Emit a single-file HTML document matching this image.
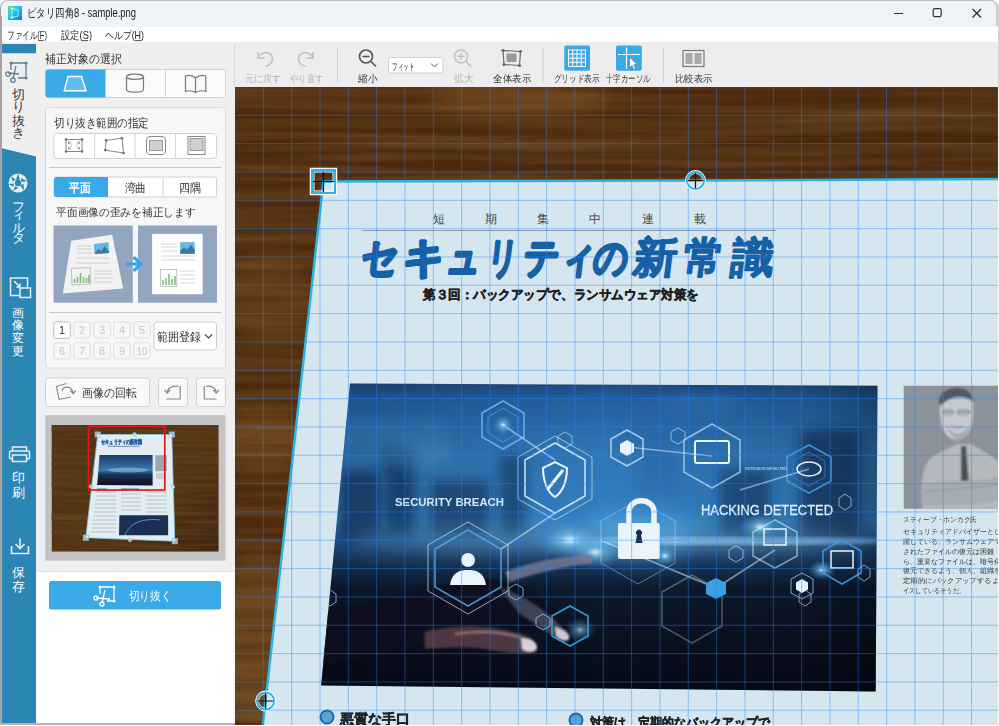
<!DOCTYPE html>
<html><head><meta charset="utf-8">
<style>
html,body{margin:0;padding:0;width:999px;height:726px;overflow:hidden;background:#fff;font-family:"Liberation Sans",sans-serif;}
.a{position:absolute;}
#win{position:absolute;left:0;top:0;width:999px;height:726px;background:#fff;overflow:hidden;}
</style></head><body>
<div id="win">
<div class="a" style="left:0;top:0;width:999px;height:26.5px;background:#eef2f9;border-top:1px solid #b9bcc0;box-sizing:border-box;"></div>
<div class="a" style="left:983px;top:0;width:16px;height:16px;background:#fff;"></div><div class="a" style="left:983px;top:0;width:16px;height:26px;border-top-right-radius:8px;border-right:3px solid #d0d0d0;border-top:1px solid #b9bcc0;box-sizing:border-box;background:#eef2f9;"></div>
<div class="a" style="left:0;top:26.5px;width:999px;height:15.75px;background:#fff;"></div>
<div class="a" style="left:0;top:8px;width:1.5px;height:716px;background:#a6a3a1;"></div><div class="a" style="left:0;top:0;width:8px;height:8px;background:#fff;"></div><div class="a" style="left:0;top:0;width:16px;height:16px;border-top-left-radius:8px;border-left:1.5px solid #a6a3a1;border-top:1px solid #b9bcc0;box-sizing:border-box;background:#eef2f9;"></div>
<div class="a" style="left:0;top:723px;width:235px;height:1.5px;background:#b4b4b4;"></div>
<div class="a" style="left:36px;top:42.25px;width:199px;height:529px;background:#efefef;"></div>
<div class="a" style="left:36px;top:571px;width:199px;height:152px;background:#fff;border-top:1px solid #e2e2e2;box-sizing:border-box;"></div>
<div class="a" style="left:235px;top:42.25px;width:763px;height:44.75px;background:#ededed;"></div><div class="a" style="left:998px;top:26px;width:1px;height:61px;background:#d0d0d0;"></div>
<div class="a" style="left:235px;top:87px;width:763px;height:638px;overflow:hidden;"><svg width="764" height="639" viewBox="0 0 764 639" style="position:absolute;left:0;top:0">
<defs>
<filter id="wood" x="235" y="87" width="764" height="639" filterUnits="userSpaceOnUse">
<feTurbulence type="fractalNoise" baseFrequency="0.003 0.09" numOctaves="3" seed="7"/>
<feColorMatrix type="matrix" values="0 0 0 0 0.2  0 0 0 0 0.1  0 0 0 0 0.03  1.1 0 0 0 -0.36"/>
</filter>
<linearGradient id="woodbase" x1="0" y1="0" x2="1" y2="1">
<stop offset="0" stop-color="#4e2a0c"/><stop offset="0.5" stop-color="#4a280c"/><stop offset="1" stop-color="#3e220a"/>
</linearGradient>
<linearGradient id="imgv" x1="0" y1="0" x2="0" y2="1">
<stop offset="0" stop-color="#1c4478"/>
<stop offset="0.06" stop-color="#2460a0"/>
<stop offset="0.22" stop-color="#2f76b6"/>
<stop offset="0.45" stop-color="#3380bf"/>
<stop offset="0.55" stop-color="#1e4470"/>
<stop offset="0.66" stop-color="#0e1a2e"/>
<stop offset="1" stop-color="#070a14"/>
</linearGradient>
<linearGradient id="imgh" x1="0" y1="0" x2="1" y2="0">
<stop offset="0" stop-color="#000" stop-opacity="0.15"/>
<stop offset="0.5" stop-color="#000" stop-opacity="0"/>
<stop offset="0.85" stop-color="#000" stop-opacity="0.1"/>
<stop offset="1" stop-color="#000" stop-opacity="0.35"/>
</linearGradient>
<radialGradient id="glow" cx="0.5" cy="0.5" r="0.5">
<stop offset="0" stop-color="#e8f8ff" stop-opacity="0.95"/>
<stop offset="0.3" stop-color="#7cc8f0" stop-opacity="0.6"/>
<stop offset="1" stop-color="#3a90d0" stop-opacity="0"/>
</radialGradient>
<radialGradient id="blob" cx="0.5" cy="0.5" r="0.5">
<stop offset="0" stop-color="#0c2040" stop-opacity="0.7"/>
<stop offset="1" stop-color="#0c2040" stop-opacity="0"/>
</radialGradient>
<filter id="blur6" x="-20%" y="-20%" width="140%" height="140%"><feGaussianBlur stdDeviation="6"/></filter><filter id="blur10" x="-50%" y="-200%" width="200%" height="500%"><feGaussianBlur stdDeviation="10"/></filter><filter id="blur1"><feGaussianBlur stdDeviation="0.8"/></filter><filter id="blur2"><feGaussianBlur stdDeviation="2"/></filter>
<clipPath id="imgclip"><polygon points="350,383.5 877.5,385.8 875.7,691.5 321.1,685.4"/></clipPath>
<clipPath id="portclip"><rect x="903.5" y="385.5" width="100" height="123.3"/></clipPath>
</defs>
<g transform="translate(-235,-87)">
<!-- wood -->
<rect x="235" y="87" width="764" height="639" fill="url(#woodbase)"/>
<rect x="235" y="87" width="764" height="639" filter="url(#wood)"/>
<ellipse cx="520" cy="100" rx="90" ry="18" fill="#9a6a30" opacity="0.35" filter="url(#blur10)"/>
<ellipse cx="260" cy="640" rx="45" ry="90" fill="#9a6a30" opacity="0.3" filter="url(#blur10)"/>
<ellipse cx="270" cy="300" rx="40" ry="50" fill="#8a5a28" opacity="0.25" filter="url(#blur10)"/>
<ellipse cx="265" cy="440" rx="40" ry="35" fill="#9a6a30" opacity="0.3" filter="url(#blur10)"/>
<!-- document -->
<polygon points="323.4,181.6 695.5,180.6 1005,179 1005,760 259,760" fill="#d5e6ef"/>
<!-- doc header -->
<g font-family="Liberation Serif, serif" font-size="12" fill="#444">
<text x="433" y="223">短</text><text x="485" y="223">期</text><text x="537" y="223">集</text><text x="589" y="223">中</text><text x="642" y="223">連</text><text x="694" y="223">載</text>
</g>
<rect x="362" y="230" width="414" height="1" fill="#8c9aa2"/>
<g font-size="42" font-weight="bold" fill="#1660a6" stroke="#1660a6" stroke-linejoin="round" transform="translate(0,272) skewX(-7) translate(0,-272)">
<text x="360" y="272" stroke-width="3.0" textLength="37.5" lengthAdjust="spacingAndGlyphs">セ</text>
<text x="402.5" y="272" stroke-width="3.0" textLength="41.2" lengthAdjust="spacingAndGlyphs">キ</text>
<text x="445" y="272" stroke-width="3.0" textLength="35.0" lengthAdjust="spacingAndGlyphs">ュ</text>
<text x="486" y="272" stroke-width="3.0" textLength="30.0" lengthAdjust="spacingAndGlyphs">リ</text>
<text x="522.5" y="272" stroke-width="3.0" textLength="36.2" lengthAdjust="spacingAndGlyphs">テ</text>
<text x="560" y="272" stroke-width="3.0" textLength="33.8" lengthAdjust="spacingAndGlyphs">ィ</text>
<text x="592.5" y="272" stroke-width="2.6" textLength="35.0" lengthAdjust="spacingAndGlyphs">の</text>
<text x="632.5" y="272" stroke-width="1.5" textLength="43.5" lengthAdjust="spacingAndGlyphs">新</text>
<text x="682.5" y="272" stroke-width="1.5" textLength="40.0" lengthAdjust="spacingAndGlyphs">常</text>
<text x="730" y="272" stroke-width="1.4" textLength="42.5" lengthAdjust="spacingAndGlyphs">識</text>
</g>
<text x="423" y="299" font-size="12.5" font-weight="bold" fill="#1e1e1e" stroke="#1e1e1e" stroke-width="0.5" textLength="276" lengthAdjust="spacingAndGlyphs">第３回：バックアップで、ランサムウェア対策を</text>
<!-- image -->
<g clip-path="url(#imgclip)">
<rect x="315" y="380" width="570" height="315" fill="url(#imgv)"/>
<g filter="url(#blur6)">
<rect x="340" y="470" width="40" height="70" fill="#163a66" opacity="0.8"/>
<rect x="385" y="445" width="30" height="95" fill="#143460" opacity="0.7"/>
<rect x="430" y="480" width="60" height="60" fill="#183c6a" opacity="0.7"/>
<rect x="500" y="455" width="25" height="85" fill="#123058" opacity="0.6"/>
<rect x="720" y="470" width="50" height="70" fill="#15345e" opacity="0.6"/>
<rect x="800" y="430" width="60" height="110" fill="#10284e" opacity="0.6"/>
<rect x="640" y="430" width="35" height="60" fill="#2a6aa8" opacity="0.5"/>
<rect x="330" y="420" width="120" height="25" fill="#3f86c2" opacity="0.35"/>
<ellipse cx="420" cy="455" rx="35" ry="12" fill="#4a92cc" opacity="0.5"/>
<ellipse cx="700" cy="405" rx="40" ry="10" fill="#3a7ab8" opacity="0.4"/>
</g>
<rect x="315" y="380" width="570" height="315" fill="url(#imgh)"/>
<g filter="url(#blur10)">
<ellipse cx="610" cy="540" rx="260" ry="9" fill="#8fd0f5" opacity="0.45"/>

<ellipse cx="640" cy="535" rx="55" ry="25" fill="#5ab0e8" opacity="0.5"/>
</g>
<ellipse cx="720" cy="541" rx="170" ry="3.5" fill="#bfe6fb" opacity="0.55" filter="url(#blur2)"/>
<ellipse cx="595" cy="552" rx="30" ry="18" fill="url(#glow)"/>
<ellipse cx="570" cy="540" rx="34" ry="20" fill="url(#glow)"/>
<ellipse cx="760" cy="527" rx="22" ry="14" fill="url(#glow)"/>
<ellipse cx="822" cy="570" rx="14" ry="10" fill="url(#glow)"/>
<ellipse cx="665" cy="556" rx="12" ry="10" fill="url(#glow)"/>
<ellipse cx="503" cy="425" rx="10" ry="10" fill="url(#glow)"/>
<ellipse cx="580" cy="630" rx="16" ry="12" fill="url(#glow)" opacity="0.7"/>
<!-- hand -->
<g filter="url(#blur1)">
<path d="M315 615 C360 605 420 590 470 580 C500 575 525 585 545 603 C558 614 570 628 570 637 C566 643 556 640 548 632 C538 630 525 628 512 624 C480 628 440 640 400 650 C370 656 340 662 315 665 Z" fill="#0e121c" opacity="0.9"/>
<path d="M500 588 C525 596 548 612 562 628 C568 634 566 640 560 640 C552 636 540 626 520 614 Z" fill="#4a4e62" opacity="0.8"/>
<path d="M425 632 C455 624 495 626 522 634 C536 639 541 647 535 652 C522 655 500 652 478 648 C458 646 440 648 425 649 Z" fill="#5a4048" opacity="0.85"/>
<path d="M455 634 C480 630 505 632 522 638" stroke="#c89c9c" stroke-width="2" fill="none" opacity="0.6"/>
<path d="M521 638 C530 638 537 642 537 648 C535 653 527 653 522 649 Z" fill="#d8d0d4"/>
<path d="M555 627 C562 629 570 633 569 639 C566 643 559 640 556 635 Z" fill="#cfc8d0"/>
<path d="M505 572 C530 562 560 556 592 555 L592 563 C562 567 532 574 510 582 Z" fill="#7a7a92" opacity="0.8"/>

</g>
<g fill="none" stroke="#d8eefa" stroke-width="1.6" opacity="0.9">
<polygon points="555,443 585,460 585,496 555,513 525,496 525,460"/>
<polygon points="468,530 501,549 501,587 468,606 435,587 435,549" stroke="#5ab0ea" opacity="0.9"/>
<polygon points="503,401 524,413 524,437 503,449 482,437 482,413" stroke="#6cb8e8"/>
<polygon points="712,424 740,440 740,472 712,488 684,472 684,440" opacity="0.7"/>
<polygon points="627,430 643,439 643,457 627,466 611,457 611,439" opacity="0.8"/>
<polygon points="809,445 831,457 831,481 809,493 787,481 787,457" stroke="#3f9de0"/>
<polygon points="775,520 797,532 797,556 775,568 753,556 753,532" opacity="0.6"/>
<polygon points="842,540 861,551 861,573 842,584 823,573 823,551" stroke="#3f9de0"/>
<polygon points="570,606 588,616 588,636 570,646 552,636 552,616" stroke="#3fa8e8"/>
<polygon points="692,575 722,592 722,626 692,643 662,626 662,592" opacity="0.35"/>
<path d="M503 425 L555 460 M555 513 L501 549 M627 447 L712 456 M809 469 L740 490 M600 540 L716 588 L775 550" opacity="0.6"/>
</g>
<g fill="none" stroke="#cfe8f8" stroke-width="1" opacity="0.7">
<polygon points="555,436 592,457 592,499 555,520 518,499 518,457"/>
<polygon points="468,522 508,545 508,591 468,614 428,591 428,545"/>
<polygon points="503,408 518,417 518,433 503,442 488,433 488,417" stroke="#4aa6e8"/>
<polygon points="809,452 825,461 825,477 809,486 793,477 793,461" stroke="#2f8ad8"/>
<polygon points="638,500 675,521 675,563 638,584 601,563 601,521" opacity="0.6"/>
</g>
<path d="M547 490 L563 470" stroke="#eaf4fb" stroke-width="3"/>
<text x="745" y="470" font-size="4" fill="#cfe8f8" textLength="42">INTRUSION DETECTED</text>
<g fill="none" stroke="#cfe8f8" stroke-width="0.8" opacity="0.8">
<polygon points="565,432 572,436 572,444 565,448 558,444 558,436"/>
<polygon points="678,428 685,432 685,440 678,444 671,440 671,432"/>
<polygon points="516,584 523,588 523,596 516,600 509,596 509,588"/>
<polygon points="543,614 550,618 550,626 543,630 536,626 536,618"/>
<polygon points="736,546 743,550 743,558 736,562 729,558 729,550"/>
<polygon points="864,565 870,569 870,577 864,581 858,577 858,569"/>
<polygon points="845,494 851,498 851,506 845,510 839,506 839,498"/>
<polygon points="805,590 811,594 811,602 805,606 799,602 799,594"/>
<polygon points="330,590 336,594 336,602 330,606 324,602 324,594"/>
</g>
<polygon points="802,579 808,582.5 808,589.5 802,593 796,589.5 796,582.5" fill="#e4f2fb"/><polygon points="802,573 813,579 813,593 802,599 791,593 791,579" fill="none" stroke="#9fc8e8" stroke-width="0.8"/>
<polygon points="716,578 726,583 726,594 716,599 706,594 706,583" fill="#3aa0e0"/>
<g fill="#eaf4fb">
<path d="M543 468 L555 462 L567 468 C567 485 560 494 555 497 C550 494 543 485 543 468 Z" fill="none" stroke="#eaf4fb" stroke-width="2"/>
<rect x="618" y="523" width="42" height="36" rx="2"/><path d="M637 535a3 3 0 1 1 4 0l1.5 8h-7z" fill="#1a3050"/>
<path d="M629 524 V512 C629 497 654 497 654 512 V524" fill="none" stroke="#eaf4fb" stroke-width="5.5"/>
<circle cx="468" cy="560" r="7"/>
<path d="M450 585 C452 572 460 570 468 570 C476 570 484 572 486 585 Z"/>
<rect x="695" y="441" width="34" height="22" rx="2" fill="none" stroke="#eaf4fb" stroke-width="2"/>
<rect x="764" y="529" width="22" height="16" fill="none" stroke="#eaf4fb" stroke-width="1.5"/>
<rect x="831" y="551" width="22" height="17" fill="none" stroke="#eaf4fb" stroke-width="1.5"/>
<ellipse cx="809" cy="469" rx="12" ry="7" fill="none" stroke="#eaf4fb" stroke-width="1.5"/>
<polygon points="627,440 634,444 634,452 627,456 620,452 620,444"/>
</g>
<text x="395" y="505.5" font-size="10.5" font-weight="bold" fill="#d2eaf8" textLength="109" lengthAdjust="spacingAndGlyphs">SECURITY BREACH</text>
<text x="701" y="514.5" font-size="14.5" font-weight="normal" stroke="#dff0fc" stroke-width="0.3" fill="#dff0fc" textLength="132" lengthAdjust="spacingAndGlyphs">HACKING DETECTED</text>
</g>
<!-- portrait -->
<g clip-path="url(#portclip)">
<rect x="903.5" y="385.5" width="100" height="124" fill="#8b9399"/>
<g filter="url(#blur1)">
<path d="M922 510 C920 480 922 462 935 455 C945 450 952 446 958 444 L972 444 C980 450 992 455 999 462 L1003 510 Z" fill="#b3b9bd"/>
<path d="M940 404 C940 392 950 388 958 388 C968 388 974 394 973 408 C974 425 970 438 956 440 C944 438 939 425 940 404 Z" fill="#c6cacc"/>
<path d="M939 402 C940 390 952 387 960 388 C968 389 973 394 973 402 C968 396 950 394 941 406 Z" fill="#52585c"/>
<path d="M945 422 C948 432 952 438 958 439 C965 438 968 432 970 424 C966 430 962 434 957 434 C951 433 948 428 945 422 Z" fill="#a4a8aa"/><path d="M951 426 Q957 430 963 426" stroke="#7e8284" stroke-width="1.2" fill="none"/>
<path d="M942 412H954M957 412H971" stroke="#5a6064" stroke-width="1.1"/><rect x="943" y="410" width="10" height="5" rx="2" fill="none" stroke="#6a7074" stroke-width="0.7"/><rect x="958" y="410" width="11" height="5" rx="2" fill="none" stroke="#6a7074" stroke-width="0.7"/>
<path d="M961 446 L966 446 L969 484 L965 490 L961 484 Z" fill="#4a5055"/>
<path d="M922 485 C940 478 970 484 1003 476 L1003 500 C975 506 945 505 922 506 Z" fill="#a6adb2"/>
<path d="M925 492 C950 487 975 490 1000 484" stroke="#8c9398" stroke-width="1.2" fill="none"/>
</g>
</g>
<g font-size="7.2" fill="#3a3a3a">
<text x="903" y="522.2" textLength="74" lengthAdjust="spacingAndGlyphs">スティーブ・ホンカク氏</text>
<text x="903" y="534.2">セキュリティアドバイザーとして活</text>
<text x="903" y="544.0">躍している。ランサムウェアで</text>
<text x="903" y="553.8">されたファイルの復元は困難</text>
<text x="903" y="563.6">ら、重要なファイルは、暗号化</text>
<text x="903" y="573.4">復元できるよう、個人、組織を</text>
<text x="903" y="583.2" textLength="96" lengthAdjust="spacingAndGlyphs">定期的にバックアップするよ</text>
<text x="903" y="593.0" textLength="62" lengthAdjust="spacingAndGlyphs">イスしているそうだ。</text>
</g>
<!-- bullets -->
<circle cx="327" cy="717" r="6.5" fill="#5aa2d6" stroke="#1f6aac" stroke-width="2"/>
<text x="340" y="724" font-size="14" font-weight="bold" fill="#222" stroke="#222" stroke-width="0.5">悪質な手口</text>
<circle cx="576" cy="720" r="6.5" fill="#5aa2d6" stroke="#1f6aac" stroke-width="2"/>
<text x="590" y="726.5" font-size="13" font-weight="bold" fill="#222" stroke="#222" stroke-width="0.5" textLength="180" lengthAdjust="spacingAndGlyphs">対策は、定期的なバックアップで</text>
<!-- doc edge -->
<polyline points="1005,179 695.5,180.6 323.4,181.6 259,760" fill="none" stroke="#2cb4e6" stroke-width="2.5"/>
</g>
<!-- grid -->
<path d="M28.33 0V639 M56.66 0V639 M84.99 0V639 M113.32 0V639 M141.65 0V639 M169.98 0V639 M198.31 0V639 M226.64 0V639 M254.97 0V639 M283.30 0V639 M311.63 0V639 M339.96 0V639 M368.29 0V639 M396.62 0V639 M424.95 0V639 M453.28 0V639 M481.61 0V639 M509.94 0V639 M538.27 0V639 M566.60 0V639 M594.93 0V639 M623.26 0V639 M651.59 0V639 M679.92 0V639 M708.25 0V639 M736.58 0V639 M764.91 0V639 M0 28.33H764 M0 56.66H764 M0 84.99H764 M0 113.32H764 M0 141.65H764 M0 169.98H764 M0 198.31H764 M0 226.64H764 M0 254.97H764 M0 283.30H764 M0 311.63H764 M0 339.96H764 M0 368.29H764 M0 396.62H764 M0 424.95H764 M0 453.28H764 M0 481.61H764 M0 509.94H764 M0 538.27H764 M0 566.60H764 M0 594.93H764 M0 623.26H764" stroke="#2382ff" stroke-opacity="0.42" stroke-width="1" fill="none"/>
<g transform="translate(-235,-87)">
<!-- handles -->
<rect x="310.5" y="168.5" width="26" height="26" fill="none" stroke="#fff" stroke-width="1.5"/>
<rect x="312" y="170" width="23" height="23" fill="none" stroke="#2cb4e6" stroke-width="2"/>
<rect x="314" y="172" width="19" height="19" fill="none" stroke="#fff" stroke-width="1"/>
<path d="M323.5 172V192M313 181.5H334" stroke="#111" stroke-width="1.2"/>
<circle cx="695.5" cy="180.5" r="9.8" fill="none" stroke="#fff" stroke-width="1.2"/>
<circle cx="695.5" cy="180.5" r="8.5" fill="none" stroke="#2cb4e6" stroke-width="2"/>
<circle cx="695.5" cy="180.5" r="7" fill="none" stroke="#fff" stroke-width="0.8"/>
<path d="M695.5 173V188M688 180.5H703" stroke="#111" stroke-width="1.2"/>
<circle cx="265.6" cy="701" r="9.8" fill="none" stroke="#fff" stroke-width="1.2"/>
<circle cx="265.6" cy="701" r="8.5" fill="none" stroke="#2cb4e6" stroke-width="2"/>
<circle cx="265.6" cy="701" r="7" fill="none" stroke="#fff" stroke-width="0.8"/>
<path d="M265.6 693.5V708.5M258 701H273" stroke="#111" stroke-width="1.2"/>
</g>
</svg>
</div>
<div class="a" style="left:2px;top:42px;width:34px;height:681px;background:#2b86b4;overflow:hidden;">
<svg class="a" style="left:0;top:0" width="34" height="681" viewBox="0 42 34 681" font-family="Liberation Sans, sans-serif">
<rect x="0" y="42" width="34" height="2" fill="#efefef"/><polygon points="0,53.25 34,53.25 34,156.4 0,148.2" fill="#efefef"/>
<g fill="none" stroke="#5f7f94" stroke-width="1.3"><path d="M9 63H24V78H16"/><path d="M9 63V70"/><path d="M14 66L11 79M6 73L17 74"/><circle cx="6" cy="74" r="2.2"/><circle cx="11" cy="80" r="2.2"/></g><g fill="#5f7f94"><circle cx="9" cy="63" r="1.6"/><circle cx="24" cy="63" r="1.6"/><circle cx="24" cy="78" r="1.6"/></g>
<g font-size="12.5" fill="#333" text-anchor="middle"><text x="16" y="99">切</text><text x="16" y="111">り</text><text x="16" y="125">抜</text><text x="16" y="137">き</text></g>
<circle cx="16" cy="183" r="9.5" fill="#e8eef2"/>
<g fill="#2b86b4"><circle cx="16" cy="183" r="3.2"/><path d="M16 173.5L18 179.5L14 180Z M25 181L19.5 182L19 178Z M22 190.5L18 185.5L21.5 184Z M11 191L13.5 186L16 188Z M6.8 184L12 183.5L11.5 187Z M9 176L13.5 179.8L10.8 181.5Z"/></g>
<g font-size="12.5" fill="#fff" text-anchor="middle"><text x="16" y="211">フ</text><text x="16" y="219">ィ</text><text x="16" y="232">ル</text><text x="16" y="242">タ</text></g>
<g fill="none" stroke="#e8eef2" stroke-width="1.5"><path d="M17 295.5H8.5V278H25.5V288"/><rect x="18" y="288" width="10.5" height="9.5"/><path d="M12 281L18 287M18 287V283.5M18 287H14.5"/></g>
<g font-size="12" fill="#fff" text-anchor="middle"><text x="16" y="317">画</text><text x="16" y="329">像</text><text x="16" y="342">変</text><text x="16" y="355">更</text></g>
<g fill="none" stroke="#e8eef2" stroke-width="1.5"><path d="M10.5 451V447H24.5V451"/><path d="M10.5 459H9C8 459 7.5 458 7.5 457V453C7.5 452 8 451 9.5 451H25.5C27 451 27.5 452 27.5 453V457C27.5 458 27 459 26 459H24.5"/><rect x="10.5" y="455" width="14" height="6.5"/></g>
<g font-size="12.5" fill="#fff" text-anchor="middle"><text x="16" y="482">印</text><text x="16" y="497">刷</text></g>
<g fill="none" stroke="#e8eef2" stroke-width="1.6"><path d="M18 538.5V548M13.5 544L18 548.5L22.5 544"/><path d="M9.5 546V553.5H26.5V546"/></g>
<g font-size="12.5" fill="#fff" text-anchor="middle"><text x="16" y="577">保</text><text x="16" y="591">存</text></g>
</svg>
</div>

<svg class="a" style="left:0;top:0;" width="999" height="726" viewBox="0 0 999 726" font-family="Liberation Sans, sans-serif"><defs><linearGradient id="ic" x1="0" y1="0" x2="1" y2="1"><stop offset="0" stop-color="#6fe08a"/><stop offset="0.45" stop-color="#1ec8f0"/><stop offset="1" stop-color="#1a6fd8"/></linearGradient></defs>
<rect x="8" y="6" width="14" height="14" fill="url(#ic)"/>
<path d="M12 8.5V17.5M12 8.5L18 10V16L12 17.5" stroke="#fff" stroke-width="0.8" fill="none" opacity="0.8"/><circle cx="12" cy="8.5" r="1.1" fill="#fff"/><circle cx="12" cy="17.5" r="1.1" fill="#fff"/>
<text x="27" y="17.2" font-size="12" fill="#1a1a1a" font-weight="normal" text-anchor="start" textLength="109" lengthAdjust="spacingAndGlyphs">ピタリ四角8 - sample.png</text>
<rect x="894" y="13" width="9" height="1" fill="#333"/>
<rect x="933.2" y="8.7" width="8" height="8" rx="1.6" fill="none" stroke="#333" stroke-width="1.2"/>
<path d="M972.5 9L981 17.5M981 9L972.5 17.5" stroke="#222" stroke-width="1.1"/>
<text x="7" y="39.2" font-size="11" fill="#222" font-weight="normal" text-anchor="start" textLength="40" lengthAdjust="spacingAndGlyphs">ファイル(F)</text>
<rect x="38.5" y="40.3" width="5" height="0.8" fill="#222"/>
<text x="61" y="39.2" font-size="11" fill="#222" font-weight="normal" text-anchor="start" textLength="31" lengthAdjust="spacingAndGlyphs">設定(S)</text>
<rect x="82" y="40.3" width="6" height="0.8" fill="#222"/>
<text x="105" y="39.2" font-size="11" fill="#222" font-weight="normal" text-anchor="start" textLength="39" lengthAdjust="spacingAndGlyphs">ヘルプ(H)</text>
<rect x="135" y="40.3" width="6" height="0.8" fill="#222"/>
<text x="45" y="63" font-size="11.5" fill="#333" font-weight="normal" text-anchor="start" textLength="77" lengthAdjust="spacingAndGlyphs">補正対象の選択</text>
<rect x="45.5" y="69.5" width="180" height="28" rx="3" fill="#fafafa" stroke="#d2d2d2"/>
<path d="M48.5 69.5H105.5V97.5H48.5A3 3 0 0 1 45.5 94.5V72.5A3 3 0 0 1 48.5 69.5Z" fill="#3aa9e8"/>
<line x1="165.5" y1="70" x2="165.5" y2="97" stroke="#d2d2d2"/>
<polygon points="68,76.5 81.5,76.5 86,90.8 64.2,90.8" fill="#5cbdf1" stroke="#fff" stroke-width="1.4"/>
<g fill="none" stroke="#7a7a7a" stroke-width="1.2"><ellipse cx="135" cy="76.8" rx="8.5" ry="2.6"/><path d="M126.5 76.8V89.5C126.5 93 143.5 93 143.5 89.5V76.8"/><path d="M195.5 78C192 75 188 75 185.5 76V91.5C188 90.5 192 90.5 195.5 92.5C199 90.5 203 90.5 205.8 91.5V76C203 75 199 75 195.5 78Z M195.5 78V92.5"/></g>
<rect x="45.5" y="107.5" width="180" height="260.5" rx="3" fill="#f7f7f7" stroke="#dadada"/>
<text x="54" y="127" font-size="11.5" fill="#333" font-weight="normal" text-anchor="start" textLength="95" lengthAdjust="spacingAndGlyphs">切り抜き範囲の指定</text>
<rect x="54" y="133.5" width="162.5" height="25" rx="3" fill="#fff" stroke="#d2d2d2"/>
<line x1="94.6" y1="134" x2="94.6" y2="158" stroke="#d2d2d2"/>
<line x1="135.1" y1="134" x2="135.1" y2="158" stroke="#d2d2d2"/>
<line x1="175.6" y1="134" x2="175.6" y2="158" stroke="#d2d2d2"/>
<g fill="none" stroke="#888" stroke-width="1"><rect x="66" y="139.5" width="16" height="12"/><path d="M68.5 142L71.5 144.5M68.5 142V144M68.5 142H70.5M79.5 142L76.5 144.5M79.5 142V144M79.5 142H77.5M68.5 149L71.5 146.5M68.5 149V147M68.5 149H70.5M79.5 149L76.5 146.5M79.5 149V147M79.5 149H77.5" stroke-width="0.8"/><polygon points="106.2,140.4 122,138.2 123.5,153 105.3,150.1"/><rect x="146.5" y="136.5" width="19" height="18" rx="3.5"/><rect x="188" y="136.5" width="17" height="18"/></g>
<g fill="#6a6a6a"><circle cx="66" cy="139.5" r="1.3"/><circle cx="82" cy="139.5" r="1.3"/><circle cx="66" cy="151.5" r="1.3"/><circle cx="82" cy="151.5" r="1.3"/><circle cx="106.2" cy="140.4" r="1.3"/><circle cx="122" cy="138.2" r="1.3"/><circle cx="123.5" cy="153" r="1.3"/><circle cx="105.3" cy="150.1" r="1.3"/></g>
<rect x="149.5" y="140.5" width="13" height="10" fill="#cfcfcf" stroke="#888" stroke-width="0.8"/>
<rect x="190" y="138.5" width="13" height="12" fill="#cfcfcf" stroke="#888" stroke-width="0.8"/>
<line x1="49" y1="167.5" x2="221" y2="167.5" stroke="#c8c8c8"/>
<rect x="54" y="177" width="162.5" height="20" rx="2.5" fill="#fff" stroke="#d2d2d2"/>
<path d="M56.5 177H108V197H56.5A2.5 2.5 0 0 1 54 194.5V179.5A2.5 2.5 0 0 1 56.5 177Z" fill="#3aa9e8"/>
<line x1="163" y1="177.5" x2="163" y2="196.5" stroke="#d2d2d2"/>
<text x="69.3" y="192" font-size="11.5" fill="#fff" font-weight="bold" text-anchor="start" textLength="21.7" lengthAdjust="spacingAndGlyphs">平面</text>
<text x="124.6" y="192" font-size="11.5" fill="#333" font-weight="normal" text-anchor="start" textLength="21.6" lengthAdjust="spacingAndGlyphs">湾曲</text>
<text x="178.6" y="192" font-size="11.5" fill="#333" font-weight="normal" text-anchor="start" textLength="22" lengthAdjust="spacingAndGlyphs">四隅</text>
<text x="56.3" y="216.3" font-size="11" fill="#333" font-weight="normal" text-anchor="start" textLength="139" lengthAdjust="spacingAndGlyphs">平面画像の歪みを補正します</text>
<rect x="53.5" y="225.5" width="79.3" height="77.2" fill="#94a5bf"/><rect x="138" y="225.5" width="79" height="77.2" fill="#94a5bf"/>
<polygon points="71.3,240.7 112.1,234.8 123.2,288.4 62.8,293.5" fill="#f2f2f2"/>
<rect x="152.1" y="233.9" width="50.6" height="60.4" fill="#fff"/>
<g fill="#6ab6de"><polygon points="93.9,244 108.5,242.3 109.2,253 94.5,254"/><rect x="180.2" y="242.1" width="14.5" height="11.7"/></g>
<g fill="#3a78a6"><path d="M94.5 254L98 249L101 251L105 246L109.2 252.5V253L94.5 254Z"/><path d="M180.2 253.8V251L184 247.5L187 249.5L191 245L194.7 250V253.8Z"/></g>
<g fill="none" stroke="#aaa" stroke-width="0.7"><polygon points="71.3,268.5 90.3,267.5 90.8,284 72,285"/><rect x="160.3" y="269.6" width="16.5" height="16.7"/></g>
<g stroke="#7cc07a" stroke-width="1.6"><path d="M74.5 283V279M77.5 283V277M80.5 283V273M83.5 283V277M86.5 283V278M89 283V275M163 285V280M166 285V278M169 285V274M172 285V279M175 285V276"/></g>
<g stroke="#b8b8b8" stroke-width="0.6"><path d="M77 246H92M77 249H92M76.5 253H92M76 258H110M75.5 263H110M94 271H112M94 274H112M94 278H113M94 282H113M161 244H177M161 247H177M161 251H177M161 256H195M161 260H195M180 271H195M180 275H195M180 279H195M180 283H195"/></g>
<path d="M127 264H140M134.5 258L141 264L134.5 270" fill="none" stroke="#2fa6e8" stroke-width="3.2" stroke-linecap="round" stroke-linejoin="round"/>
<line x1="49" y1="312.5" x2="221" y2="312.5" stroke="#c8c8c8"/>
<rect x="53.8" y="321.9" width="16.5" height="16.5" rx="2" fill="#fff" stroke="#bdbdbd"/>
<text x="62.05" y="334.4" font-size="11" fill="#333" font-weight="normal" text-anchor="middle">1</text>
<rect x="73.8" y="321.9" width="16.5" height="16" rx="2" fill="#f7f7f7" stroke="#dedede"/>
<text x="82.05" y="334.2" font-size="11" fill="#c6c6c6" font-weight="normal" text-anchor="middle">2</text>
<rect x="93.8" y="321.9" width="16.5" height="16" rx="2" fill="#f7f7f7" stroke="#dedede"/>
<text x="102.05" y="334.2" font-size="11" fill="#c6c6c6" font-weight="normal" text-anchor="middle">3</text>
<rect x="113.7" y="321.9" width="16.5" height="16" rx="2" fill="#f7f7f7" stroke="#dedede"/>
<text x="121.95" y="334.2" font-size="11" fill="#c6c6c6" font-weight="normal" text-anchor="middle">4</text>
<rect x="133.7" y="321.9" width="16.5" height="16" rx="2" fill="#f7f7f7" stroke="#dedede"/>
<text x="141.95" y="334.2" font-size="11" fill="#c6c6c6" font-weight="normal" text-anchor="middle">5</text>
<rect x="53.8" y="342.8" width="16.5" height="16" rx="2" fill="#f7f7f7" stroke="#dedede"/>
<text x="62.05" y="355.1" font-size="11" fill="#c6c6c6" font-weight="normal" text-anchor="middle">6</text>
<rect x="73.8" y="342.8" width="16.5" height="16" rx="2" fill="#f7f7f7" stroke="#dedede"/>
<text x="82.05" y="355.1" font-size="11" fill="#c6c6c6" font-weight="normal" text-anchor="middle">7</text>
<rect x="93.8" y="342.8" width="16.5" height="16" rx="2" fill="#f7f7f7" stroke="#dedede"/>
<text x="102.05" y="355.1" font-size="11" fill="#c6c6c6" font-weight="normal" text-anchor="middle">8</text>
<rect x="113.7" y="342.8" width="16.5" height="16" rx="2" fill="#f7f7f7" stroke="#dedede"/>
<text x="121.95" y="355.1" font-size="11" fill="#c6c6c6" font-weight="normal" text-anchor="middle">9</text>
<rect x="133.7" y="342.8" width="16.5" height="16" rx="2" fill="#f7f7f7" stroke="#dedede"/>
<text x="141.95" y="355.1" font-size="11" fill="#c6c6c6" font-weight="normal" text-anchor="middle" textLength="11" lengthAdjust="spacingAndGlyphs">10</text>
<rect x="154" y="322" width="62.5" height="28" rx="3" fill="#fff" stroke="#cccccc"/>
<text x="157.3" y="340.5" font-size="11.5" fill="#333" font-weight="normal" text-anchor="start" textLength="44" lengthAdjust="spacingAndGlyphs">範囲登録</text>
<path d="M205 334.5L208.5 338L212 334.5" fill="none" stroke="#444" stroke-width="1.1"/>
<rect x="45.5" y="378" width="104" height="28.5" rx="3" fill="#f9f9f9" stroke="#d0d0d0"/>
<rect x="158.5" y="378" width="29" height="28.5" rx="3" fill="#f9f9f9" stroke="#d0d0d0"/>
<rect x="196.5" y="378" width="29" height="28.5" rx="3" fill="#f9f9f9" stroke="#d0d0d0"/>
<text x="82.4" y="396.5" font-size="11.5" fill="#333" font-weight="normal" text-anchor="start" textLength="55" lengthAdjust="spacingAndGlyphs">画像の回転</text>
<g fill="none" stroke="#8a8a8a" stroke-width="1.2" stroke-linejoin="round"><path d="M66.5 383.5L56.5 386.5L59 399.5L71 397"/><path d="M62 391C63 386 71 385 73 392.5"/><path d="M70.5 390.5L73.2 393.5L75.8 390.5"/><path d="M180.2 386V399H166.5"/><path d="M178.5 386.3C172 385.5 167.5 388 167.3 392.5"/><path d="M164.5 390L167.3 393.2L170.1 390"/><path d="M204.3 386V399H216.5"/><path d="M206 386.3C212 385.5 216 388 216.2 392.5"/><path d="M213.4 390L216.2 393.2L219 390"/></g>
<rect x="45.2" y="415.2" width="180.3" height="145.4" fill="#c4c4c4"/>
<defs><linearGradient id="tw" x1="0" y1="0" x2="1" y2="1"><stop offset="0" stop-color="#4e2e12"/><stop offset="0.5" stop-color="#563414"/><stop offset="1" stop-color="#40250e"/></linearGradient><filter id="twood" x="51.8" y="425" width="166.7" height="126.5" filterUnits="userSpaceOnUse"><feTurbulence type="fractalNoise" baseFrequency="0.01 0.25" numOctaves="2" seed="4"/><feColorMatrix type="matrix" values="0 0 0 0 0.15  0 0 0 0 0.08  0 0 0 0 0.02  1.2 0 0 0 -0.45"/></filter><linearGradient id="tim" x1="0" y1="0" x2="0" y2="1"><stop offset="0" stop-color="#1c3c6a"/><stop offset="0.5" stop-color="#3a7ab0"/><stop offset="0.65" stop-color="#1a3050"/><stop offset="1" stop-color="#0a1020"/></linearGradient></defs>
<rect x="51.8" y="425" width="166.7" height="126.5" fill="url(#tw)"/><rect x="51.8" y="425" width="166.7" height="126.5" filter="url(#twood)"/>
<polygon points="97.7,434.5 171.8,434.5 174.8,541.2 85.8,537.7" fill="#e2edf2" stroke="#86c8e6" stroke-width="0.8"/>
<text x="101.3" y="444" font-size="6" font-weight="bold" fill="#1a5ea6" stroke="#1a5ea6" stroke-width="0.3" textLength="40.7" lengthAdjust="spacingAndGlyphs">セキュリティの新常識</text>
<rect x="108" y="445.8" width="32" height="1" fill="#7a8a96"/>
<polygon points="99.5,455 152.6,455 152.6,485.4 97.2,485" fill="url(#tim)"/>
<ellipse cx="128" cy="470" rx="20" ry="2.5" fill="#9ad2f2" opacity="0.5"/>
<rect x="155.3" y="455.2" width="11.4" height="16" fill="#9ea6ab"/><rect x="156" y="473" width="10" height="6" fill="#c8d0d4"/>
<polygon points="119.4,515.2 168.1,515.2 168.1,535.3 119,535.3" fill="#1b2e55"/>
<path d="M125 535C130 522 145 518 160 520" stroke="#6aa4d8" stroke-width="1" fill="none" opacity="0.8"/>
<g stroke="#a8b2ba" stroke-width="0.7"><path d="M96.5 492H116M96 496H116M95.5 500H116M95 504H116M94.5 508H116M94 512H116M93.5 516H116M93 520H116M92.5 524H116M92 528H116M91.5 532H116M121 494H141M121 498H141M121 502H141M121 506H141M121 510H141M146 492H167M146 496H167M146 500H167M146 504H167M146 508H167M146 512H167"/></g>
<g fill="#3a78b8"><rect x="97" y="488.5" width="10" height="1.5"/><rect x="121" y="488.5" width="18" height="1.5"/></g>
<rect x="88.5" y="426.4" width="76.3" height="63.6" fill="none" stroke="#e8141c" stroke-width="1.7"/>
<g fill="#f4fafd" fill-opacity="0.6" stroke="#86c8e6" stroke-width="0.9"><rect x="95.2" y="432" width="5" height="5"/><rect x="169.3" y="432" width="5" height="5"/><rect x="172.3" y="538.7" width="5" height="5"/><rect x="83.3" y="535.2" width="5" height="5"/><circle cx="134.5" cy="434.3" r="1.7"/><circle cx="91" cy="486.5" r="1.7"/><circle cx="173" cy="487" r="1.7"/><circle cx="130" cy="540" r="1.7"/></g>
<rect x="49" y="581" width="172" height="28.5" rx="2.5" fill="#3aa9e8"/>
<g fill="none" stroke="#fff" stroke-width="1.3"><path d="M100 587H114V601H107M100 587V594"/><path d="M105 590L102 603M96 598L110 599"/><circle cx="96" cy="598" r="2"/><circle cx="102" cy="604" r="2"/></g><g fill="#fff"><circle cx="100" cy="587" r="1.5"/><circle cx="114" cy="587" r="1.5"/><circle cx="114" cy="601" r="1.5"/></g>
<text x="128.8" y="600.3" font-size="12" fill="#fff" font-weight="normal" text-anchor="start" textLength="42.5" lengthAdjust="spacingAndGlyphs">切り抜く</text>
<line x1="234.5" y1="43" x2="234.5" y2="87" stroke="#d8d8d8"/>
<line x1="337.5" y1="48.5" x2="337.5" y2="83" stroke="#d0d0d0"/>
<line x1="543" y1="48.5" x2="543" y2="83" stroke="#d0d0d0"/>
<line x1="663.5" y1="48.5" x2="663.5" y2="83" stroke="#d0d0d0"/>
<g fill="none" stroke="#c2c2c2" stroke-width="1.6"><path d="M258 52V58H264"/><path d="M258.5 57.5C261 52 269 51 272 56C274 61 270 66 265 66"/><path d="M313 52V58H307"/><path d="M312.5 57.5C310 52 302 51 299 56C297 61 301 66 306 66"/></g>
<text x="245.4" y="82" font-size="9.5" fill="#b4b4b4" font-weight="normal" text-anchor="start" textLength="35.3" lengthAdjust="spacingAndGlyphs">元に戻す</text>
<text x="290" y="82" font-size="9.5" fill="#b4b4b4" font-weight="normal" text-anchor="start" textLength="33.5" lengthAdjust="spacingAndGlyphs">やり直す</text>
<g fill="none" stroke="#555" stroke-width="1.7"><circle cx="366" cy="56.5" r="6.5"/><path d="M371 61.5L376 66.5M362.5 56.5H369.5"/></g>
<text x="358.4" y="82" font-size="9.5" fill="#333" font-weight="normal" text-anchor="start" textLength="19.2" lengthAdjust="spacingAndGlyphs">縮小</text>
<rect x="388.5" y="57.5" width="54.5" height="15.5" rx="2" fill="#fff" stroke="#cfcfcf"/>
<text x="392" y="69.5" font-size="9.5" fill="#222" font-weight="normal" text-anchor="start" textLength="22" lengthAdjust="spacingAndGlyphs">フィット</text>
<path d="M431 63.5L434.5 67L438 63.5" fill="none" stroke="#555" stroke-width="1"/>
<g fill="none" stroke="#c2c2c2" stroke-width="1.6"><circle cx="461" cy="56.5" r="6.5"/><path d="M466 61.5L471 66.5M457.5 56.5H464.5M461 53V60"/></g>
<text x="454" y="82" font-size="9.5" fill="#b4b4b4" font-weight="normal" text-anchor="start" textLength="19.6" lengthAdjust="spacingAndGlyphs">拡大</text>
<g fill="none" stroke="#666" stroke-width="1.1"><polygon points="503,50.5 520.5,51.5 519.5,65.5 504,64.5"/></g><rect x="506.5" y="53.5" width="10" height="8.5" fill="#999"/><g fill="#666"><circle cx="503" cy="50.5" r="1.6"/><circle cx="520.5" cy="51.5" r="1.6"/><circle cx="519.5" cy="65.5" r="1.6"/><circle cx="504" cy="64.5" r="1.6"/></g>
<text x="493.3" y="82" font-size="9.5" fill="#333" font-weight="normal" text-anchor="start" textLength="37.8" lengthAdjust="spacingAndGlyphs">全体表示</text>
<rect x="564.2" y="45.6" width="25.8" height="25.2" rx="2" fill="#3aa9e8"/>
<g fill="none" stroke="#fff" stroke-width="1"><rect x="568.5" y="50" width="17" height="16.5"/><path d="M572.75 50V66.5M577 50V66.5M581.25 50V66.5M568.5 54.1H585.5M568.5 58.2H585.5M568.5 62.3H585.5"/></g>
<text x="553.5" y="82" font-size="9.5" fill="#333" font-weight="normal" text-anchor="start" textLength="46.3" lengthAdjust="spacingAndGlyphs">グリッド表示</text>
<rect x="616" y="45.6" width="25.8" height="25.2" rx="2" fill="#3aa9e8"/>
<path d="M626.5 47.5V69M618 54.5H640" stroke="#fff" stroke-width="1.2"/>
<path d="M629.5 57L629.5 68L632 65.5L634 70L635.8 69L633.8 64.8L637.2 64.5Z" fill="#fff" stroke="#2a6a9a" stroke-width="0.6"/>
<text x="606" y="82" font-size="9.5" fill="#333" font-weight="normal" text-anchor="start" textLength="44.8" lengthAdjust="spacingAndGlyphs">十字カーソル</text>
<g fill="none" stroke="#777" stroke-width="1.2"><rect x="683" y="50.5" width="21" height="16"/></g><rect x="685.5" y="53" width="7" height="11" fill="#aaa"/><rect x="694.5" y="53" width="7" height="11" fill="#aaa"/>
<text x="674.9" y="82" font-size="9.5" fill="#333" font-weight="normal" text-anchor="start" textLength="37.5" lengthAdjust="spacingAndGlyphs">比較表示</text></svg>
</div>
</body></html>
